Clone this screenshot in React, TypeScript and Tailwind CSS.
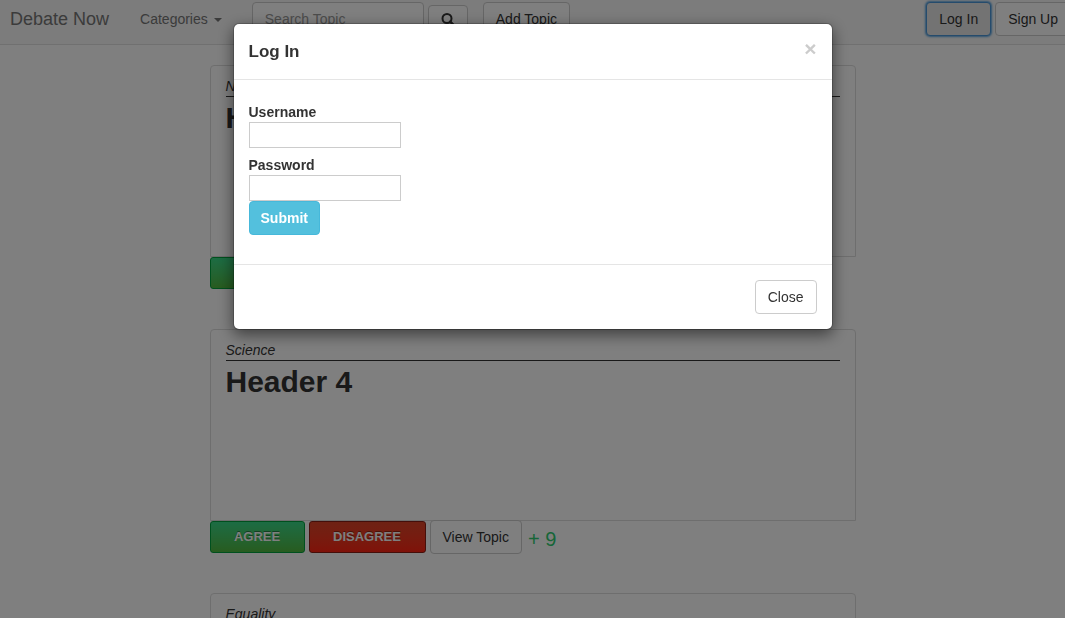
import type { ReactNode } from "react";

const plainButton =
  "h-[34px] shrink-0 rounded border border-[#ccc] bg-white px-3 text-sm whitespace-nowrap text-[#333]";

function PlainButton({ children }: { children: ReactNode }) {
  return (
    <button type="button" className={plainButton}>
      {children}
    </button>
  );
}

function Navbar() {
  return (
    <nav className="flex h-[45px] items-start border-b border-[#e0e0e0] bg-[#f8f8f8] pt-[2px] pl-[10px]">
      <a href="#" className="shrink-0 text-lg leading-[34px] text-[#777]">
        Debate Now
      </a>
      <a
        href="#categories"
        className="ml-[31px] flex shrink-0 items-center gap-[6px] text-sm leading-[34px] text-[#777]"
      >
        Categories
        <svg width="8" height="4" viewBox="0 0 8 4" fill="currentColor" className="mt-[2px]" aria-hidden="true">
          <path d="M0 0h8L4 4z" />
        </svg>
      </a>
      <form className="ml-[30px] flex shrink-0 items-start gap-1">
        <input
          type="text"
          aria-label="Search Topic"
          placeholder="Search Topic"
          className="h-[34px] w-[172px] rounded border border-[#ccc] bg-white px-3 text-sm placeholder:text-[#999]"
        />
        <button
          type="button"
          aria-label="Search"
          className="mt-[3px] flex h-[30px] w-[40px] items-start justify-center rounded border border-[#ccc] bg-white pt-[7px] text-[#333]"
        >
          <svg width="14" height="14" viewBox="0 0 14 14" fill="none" stroke="currentColor" aria-hidden="true">
            <circle cx="6" cy="5.5" r="4.5" strokeWidth="2" />
            <path d="M9.2 8.7l3.4 3.4" strokeWidth="2.6" strokeLinecap="round" />
          </svg>
        </button>
      </form>
      <div className="ml-[15px] flex">
        <PlainButton>Add Topic</PlainButton>
      </div>
      <div className="-mr-[6px] ml-auto flex gap-1">
        <button
          type="button"
          className="h-[34px] shrink-0 rounded border border-[#4a96d8] bg-[#e6e6e6] px-3 text-sm whitespace-nowrap text-[#333] shadow-[0_0_2px_1px_#5ba5e0]"
        >
          Log In
        </button>
        <PlainButton>Sign Up</PlainButton>
      </div>
    </nav>
  );
}

type Topic = { category: string; title: string; score: string };

const topics: Topic[] = [
  { category: "News", title: "Header 3", score: "+ 5" },
  { category: "Science", title: "Header 4", score: "+ 9" },
  { category: "Equality", title: "Header 5", score: "+ 2" },
];

const voteButton =
  "h-8 rounded-[3px] border text-[13px] font-bold text-white [text-shadow:0_-1px_0_rgba(0,0,0,0.4)]";

function TopicCard({ category, title, score }: Topic) {
  return (
    <article>
      <div className="h-[192px] rounded-t border border-[#ddd] px-[15px] pt-[10px]">
        <p className="border-b border-[#333] text-sm leading-5 italic">{category}</p>
        <h2 className="mt-1 text-[30px] leading-[33px] font-bold">{title}</h2>
      </div>
      <div className="-mt-px flex items-center gap-1">
        <button
          type="button"
          className={`${voteButton} w-[95px] border-[#00a03c] bg-linear-to-b from-[#38d987] to-[#4fb83e]`}
        >
          AGREE
        </button>
        <button
          type="button"
          className={`${voteButton} w-[117px] border-[#8a1f14] bg-linear-to-b from-[#dc4428] to-[#ff2412]`}
        >
          DISAGREE
        </button>
        <PlainButton>View Topic</PlainButton>
        <span className="pt-1 pl-[2px] text-xl text-[#2ecc71]">{score}</span>
      </div>
    </article>
  );
}

function Field({ id, label, type }: { id: string; label: string; type: string }) {
  return (
    <div>
      <label htmlFor={id} className="block text-sm leading-5 font-bold">
        {label}
      </label>
      <input id={id} type={type} className="block h-[26px] w-[152px] border border-[#ccc] bg-white px-1 text-sm" />
    </div>
  );
}

function LoginDialog() {
  return (
    <div className="fixed inset-0 flex items-start justify-center bg-black/50 pt-[23px]">
      <div
        role="dialog"
        aria-modal="true"
        aria-labelledby="login-title"
        className="w-full max-w-[600px] rounded-md border border-black/20 bg-white bg-clip-padding shadow-[0_5px_15px_rgba(0,0,0,0.5)]"
      >
        <header className="flex items-start justify-between border-b border-[#e5e5e5] p-[15px]">
          <h4 id="login-title" className="text-[17px] leading-[25px] font-bold">
            Log In
          </h4>
          <button type="button" aria-label="Close dialog" className="text-[21px] leading-[19px] font-bold text-[#ccc]">
            ×
          </button>
        </header>
        <form className="px-[15px] pt-[22px] pb-[29px]">
          <div className="flex flex-col gap-[7px]">
            <Field id="username" label="Username" type="text" />
            <Field id="password" label="Password" type="password" />
          </div>
          <button
            type="button"
            className="block h-[34px] rounded border border-[#46b8da] bg-[#53c0dd] px-[11px] text-sm font-bold text-white"
          >
            Submit
          </button>
        </form>
        <footer className="flex justify-end border-t border-[#e5e5e5] p-[15px]">
          <PlainButton>Close</PlainButton>
        </footer>
      </div>
    </div>
  );
}

export default function App() {
  return (
    <div className="h-screen overflow-hidden bg-white font-['Helvetica_Neue','Liberation_Sans',Arial,sans-serif] text-[#333]">
      <Navbar />
      <main className="mx-auto flex max-w-[646px] flex-col gap-[39px] pt-5">
        {topics.map((topic) => (
          <TopicCard key={topic.title} {...topic} />
        ))}
      </main>
      <LoginDialog />
    </div>
  );
}
